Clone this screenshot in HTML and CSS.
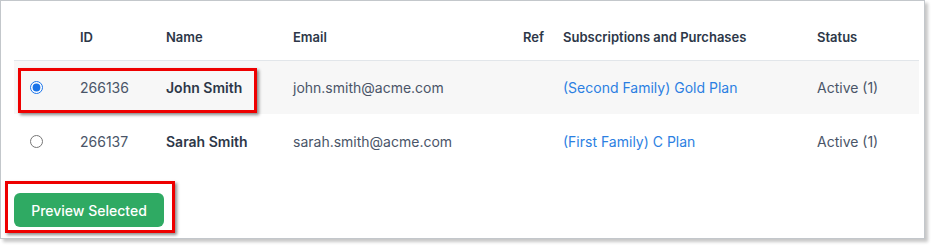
FILE: index.html
```html
<!DOCTYPE html>
<html>
<head>
<meta charset="utf-8">
<link rel="stylesheet" href="styles.css">
</head>
<body>
<div class="frame">
  <table class="grid">
    <colgroup>
      <col class="c-sel"><col class="c-id"><col class="c-name"><col class="c-email"><col class="c-ref"><col class="c-subs"><col class="c-status">
    </colgroup>
    <thead>
      <tr>
        <th></th>
        <th>ID</th>
        <th>Name</th>
        <th>Email</th>
        <th class="ref">Ref</th>
        <th>Subscriptions and Purchases</th>
        <th>Status</th>
      </tr>
    </thead>
    <tbody>
      <tr class="selected">
        <td class="sel"><input type="radio" name="cust" checked></td>
        <td>266136</td>
        <td class="name">John Smith</td>
        <td>john.smith@acme.com</td>
        <td></td>
        <td><a class="link" href="#">(Second Family) Gold Plan</a></td>
        <td>Active (1)</td>
      </tr>
      <tr class="second">
        <td class="sel"><input type="radio" name="cust"></td>
        <td>266137</td>
        <td class="name">Sarah Smith</td>
        <td>sarah.smith@acme.com</td>
        <td></td>
        <td><a class="link" href="#">(First Family) C Plan</a></td>
        <td>Active (1)</td>
      </tr>
    </tbody>
  </table>
  <div class="actions">
    <button class="btn">Preview Selected</button>
  </div>
  <div class="mark mark-row"></div>
  <div class="mark mark-btn"></div>
</div>
</body>
</html>
```

FILE: styles.css
```css
html, body {
  margin: 0;
  padding: 0;
  background: #ffffff;
}
body {
  font-family: Inter, "Noto Sans", "Liberation Sans", sans-serif;
  width: 931px;
  height: 245px;
  overflow: hidden;
}
.frame {
  position: relative;
  box-sizing: border-box;
  width: 925px;
  height: 239px;
  border: 1px solid #c3c7cb;
  box-shadow: 3px 3px 3px rgba(0, 0, 0, 0.22);
  padding: 14px 5px 10px 13px;
  background: #fff;
}
.grid {
  width: 905px;
  table-layout: fixed;
  border-collapse: collapse;
  border-spacing: 0;
}
.c-sel { width: 54px; }
.c-id { width: 86px; }
.c-name { width: 127px; }
.c-email { width: 230px; }
.c-ref { width: 40px; }
.c-subs { width: 254px; }
.c-status { width: 114px; }
th {
  height: 43px;
  padding: 0 0 2px 12px;
  text-align: left;
  font-size: 13px;
  font-weight: 600;
  color: #2d3748;
  border-bottom: 1px solid #e2e6ea;
  vertical-align: middle;
  white-space: nowrap;
}
td {
  height: 54px;
  padding: 0 0 0 12px;
  font-size: 14px;
  color: #4a5568;
  vertical-align: middle;
  white-space: nowrap;
}
tr.selected td {
  height: 53px;
  background: #f7f7f7;
}
tr.second td {
  padding-bottom: 1px;
  height: 54px;
}
td.sel {
  padding-left: 16px;
}
td.sel input {
  margin: 0;
  width: 13px;
  height: 13px;
  display: block;
  accent-color: #1a73e8;
}
td.name {
  font-weight: 600;
  color: #2d3748;
}
.link {
  color: #2c7fe2;
  text-decoration: none;
}
.actions {
  margin-top: 24px;
  display: flex;
}
.btn {
  width: 150px;
  height: 34px;
  border: none;
  border-radius: 6px;
  background: #2faa63;
  color: #ffffff;
  font-family: Inter, "Noto Sans", "Liberation Sans", sans-serif;
  font-size: 14px;
  font-weight: 500;
  padding: 0;
}
.mark {
  position: absolute;
  border: 3px solid #ee0000;
  box-shadow: 2px 2px 3px rgba(0, 0, 0, 0.45);
  box-sizing: border-box;
}
.mark-row {
  left: 17px;
  top: 67px;
  width: 239px;
  height: 45px;
}
.mark-btn {
  left: 4px;
  top: 180px;
  width: 170px;
  height: 52px;
}
```
